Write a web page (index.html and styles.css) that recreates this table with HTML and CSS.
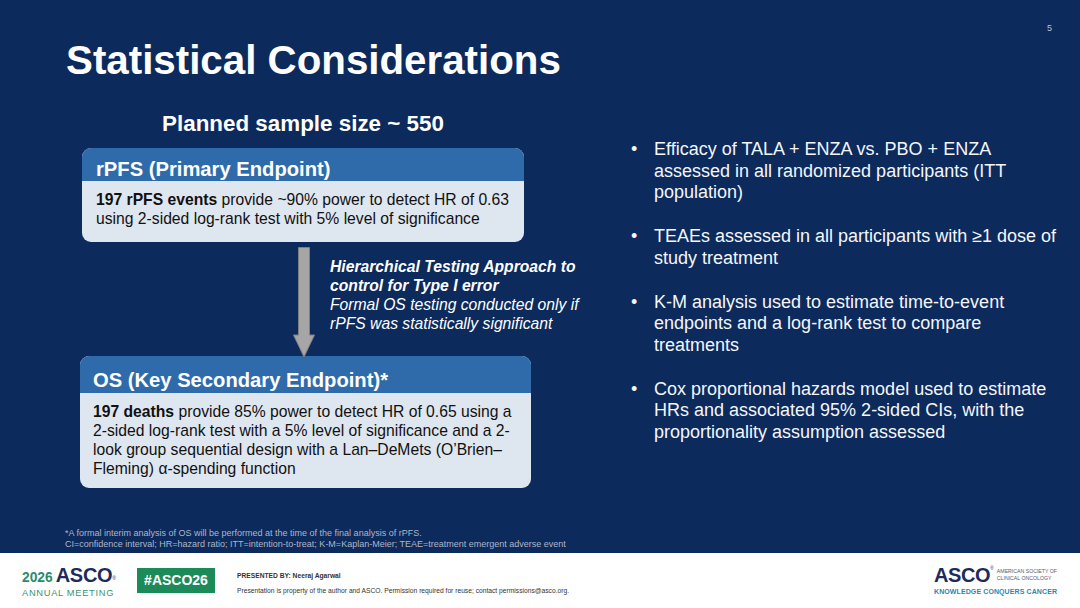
FILE: index.html
```html
<!DOCTYPE html>
<html lang="en">
<head>
<meta charset="utf-8">
<title>Statistical Considerations</title>
<link rel="stylesheet" href="styles.css">
</head>
<body>
<div class="slide">
  <header class="top">
    <h1 class="title">Statistical Considerations</h1>
    <span class="page-num">5</span>
  </header>

  <main class="content">
    <section class="left">
      <h2 class="sample">Planned sample size ~ 550</h2>

      <div class="card card-primary">
        <div class="card-head">rPFS (Primary Endpoint)</div>
        <div class="card-body"><b>197 rPFS events</b> provide ~90% power to detect HR of 0.63 using 2-sided log-rank test with 5% level of significance</div>
      </div>

      <div class="flow">
        <svg class="arrow" width="22" height="111" viewBox="0 0 22 111" aria-hidden="true">
          <path d="M5.5 0.5 H16.5 V88 H21.5 L11 110 L0.5 88 H5.5 Z" fill="#a6a6a6" stroke="#7f7f7f" stroke-width="1"/>
        </svg>
        <div class="flow-note">
          <p class="note-strong">Hierarchical Testing Approach to<br>control for Type I error</p>
          <p class="note">Formal OS testing conducted only if<br>rPFS was statistically significant</p>
        </div>
      </div>

      <div class="card card-secondary">
        <div class="card-head">OS (Key Secondary Endpoint)*</div>
        <div class="card-body"><b>197 deaths</b> provide 85% power to detect HR of 0.65 using a 2-sided log-rank test with a 5% level of significance and a 2-look group sequential design with a Lan–DeMets (O’Brien–Fleming) α-spending function</div>
      </div>
    </section>

    <section class="right">
      <ul class="bullets">
        <li>Efficacy of TALA + ENZA vs. PBO + ENZA assessed in all randomized participants (ITT population)</li>
        <li>TEAEs assessed in all participants with ≥1 dose of study treatment</li>
        <li>K-M analysis used to estimate time-to-event endpoints and a log-rank test to compare treatments</li>
        <li>Cox proportional hazards model used to estimate HRs and associated 95% 2-sided CIs, with the proportionality assumption assessed</li>
      </ul>
    </section>
  </main>

  <div class="footnote">
    <p>*A formal interim analysis of OS will be performed at the time of the final analysis of rPFS.</p>
    <p>CI=confidence interval; HR=hazard ratio; ITT=intention-to-treat; K-M=Kaplan-Meier; TEAE=treatment emergent adverse event</p>
  </div>

  <footer class="footer">
    <div class="meeting-logo">
      <div class="meeting-top"><span class="year">2026</span><span class="asco">ASCO</span><span class="reg">®</span></div>
      <div class="meeting-sub">ANNUAL MEETING</div>
    </div>
    <div class="hashtag">#ASCO26</div>
    <div class="presenter">
      <p class="presented-by">PRESENTED BY: Neeraj Agarwal</p>
      <p class="property">Presentation is property of the author and ASCO. Permission required for reuse; contact permissions@asco.org.</p>
    </div>
    <div class="society-logo">
      <div class="society-top">
        <span class="asco-big">ASCO</span><span class="reg reg-big">®</span>
        <span class="society-name">AMERICAN SOCIETY OF<br>CLINICAL ONCOLOGY</span>
      </div>
      <div class="tagline">KNOWLEDGE CONQUERS CANCER</div>
    </div>
  </footer>
</div>
</body>
</html>
```

FILE: styles.css
```css
* { box-sizing: border-box; }

body {
  margin: 0;
  background: #ffffff;
}

.slide {
  width: 1080px;
  height: 608px;
  background: #0c2a5c;
  display: flex;
  flex-direction: column;
  overflow: hidden;
  font-family: "Liberation Sans", Arial, sans-serif;
  color: #ffffff;
}

/* ---------- header ---------- */
.top {
  display: flex;
  justify-content: space-between;
  align-items: flex-start;
  padding: 0 28px 0 66px;
  flex: none;
  height: 81px;
}

.title {
  margin: 40px 0 0;
  font-size: 40.3px;
  line-height: 41px;
  font-weight: bold;
}

.page-num {
  margin-top: 22px;
  font-size: 9px;
  line-height: 12px;
  color: #b9c2d3;
}

/* ---------- content ---------- */
.content {
  flex: 1;
  display: flex;
  min-height: 0;
}

.left {
  margin-left: 80px;
  width: 520px;
  flex: none;
}

.sample {
  margin: 30px 0 11px 2px;
  width: 442px;
  text-align: center;
  font-size: 22.4px;
  line-height: 26px;
  font-weight: bold;
}

.card {
  border-radius: 9px;
  overflow: hidden;
  background: #dee6f0;
  color: #111111;
}

.card-primary {
  width: 442px;
  margin-left: 2px;
}

.card-secondary {
  width: 451px;
}

.card-head {
  background: #2f6bab;
  color: #ffffff;
  font-weight: bold;
  font-size: 20.2px;
  line-height: 23px;
}

.card-primary .card-head {
  height: 33px;
  padding: 10px 14px 0;
}

.card-secondary .card-head {
  height: 37px;
  padding: 13px 13px 0;
}

.card-body {
  font-size: 15.7px;
  line-height: 19px;
}

.card-primary .card-body {
  padding: 9px 12px 14px 14px;
}

.card-secondary .card-body {
  padding: 9px 11px 10px 13px;
}

.flow {
  height: 114px;
  display: flex;
  align-items: flex-start;
}

.arrow {
  flex: none;
  display: block;
  margin: 5px 0 0 213px;
}

.flow-note {
  margin: 15px 0 0 15px;
  font-size: 15.7px;
  line-height: 19px;
  font-style: italic;
  white-space: nowrap;
}

.flow-note p {
  margin: 0;
}

.note-strong {
  font-weight: bold;
}

.right {
  margin-left: 31px;
  width: 433px;
  flex: none;
}

.bullets {
  list-style: none;
  margin: 58px 0 0;
  padding: 0;
}

.bullets li {
  position: relative;
  padding-left: 23px;
  font-size: 18px;
  line-height: 21.5px;
  margin-bottom: 22.5px;
  color: #f4f6fa;
}

.bullets li::before {
  content: "•";
  position: absolute;
  left: 0;
  top: 0;
}

/* ---------- footnote ---------- */
.footnote {
  flex: none;
  padding: 0 0 3px 65px;
  font-size: 9px;
  line-height: 11px;
  color: #aeb6c6;
}

.footnote p {
  margin: 0;
}

/* ---------- footer ---------- */
.footer {
  flex: none;
  height: 55px;
  background: #ffffff;
  display: flex;
  align-items: center;
  color: #222222;
}

.meeting-logo {
  margin-left: 22px;
  width: 93px;
  flex: none;
  margin-top: 1px;
}

.meeting-top {
  display: flex;
  align-items: baseline;
  line-height: 20px;
}

.year {
  font-size: 13.8px;
  font-weight: bold;
  color: #2e8a6e;
  margin-right: 3px;
}

.asco {
  font-size: 20px;
  font-weight: bold;
  color: #1d2a5b;
  letter-spacing: -0.3px;
}

.reg {
  font-size: 5px;
  color: #1d2a5b;
  align-self: flex-start;
  margin-top: 3px;
}

.meeting-sub {
  font-size: 9.3px;
  line-height: 10px;
  letter-spacing: 0.7px;
  color: #3a9277;
  white-space: nowrap;
}

.hashtag {
  margin-left: 22px;
  width: 78px;
  height: 25px;
  flex: none;
  background: #1d8a59;
  color: #ffffff;
  font-weight: bold;
  font-size: 14px;
  line-height: 25px;
  text-align: center;
}

.presenter {
  margin-left: 22px;
  margin-top: 6px;
  flex: none;
  color: #333333;
}

.presenter p {
  margin: 0;
  white-space: nowrap;
}

.presented-by {
  font-size: 6.7px;
  line-height: 8px;
  font-weight: bold;
  margin-bottom: 7px !important;
}

.property {
  font-size: 6.7px;
  line-height: 8px;
}

.society-logo {
  margin-left: auto;
  margin-right: 23px;
  flex: none;
  width: 123px;
}

.society-top {
  display: flex;
  align-items: center;
  height: 20px;
}

.asco-big {
  font-size: 20px;
  font-weight: bold;
  color: #1d2a5b;
  letter-spacing: -0.4px;
  line-height: 20px;
}

.reg-big {
  align-self: flex-start;
  margin-top: 1px;
  font-size: 4.5px;
}

.society-name {
  margin-left: auto;
  font-size: 5.2px;
  line-height: 6.6px;
  color: #555a66;
  white-space: nowrap;
}

.tagline {
  margin-top: 2px;
  font-size: 7px;
  line-height: 9px;
  font-weight: bold;
  color: #2b87b3;
  letter-spacing: 0.1px;
  white-space: nowrap;
}
```
